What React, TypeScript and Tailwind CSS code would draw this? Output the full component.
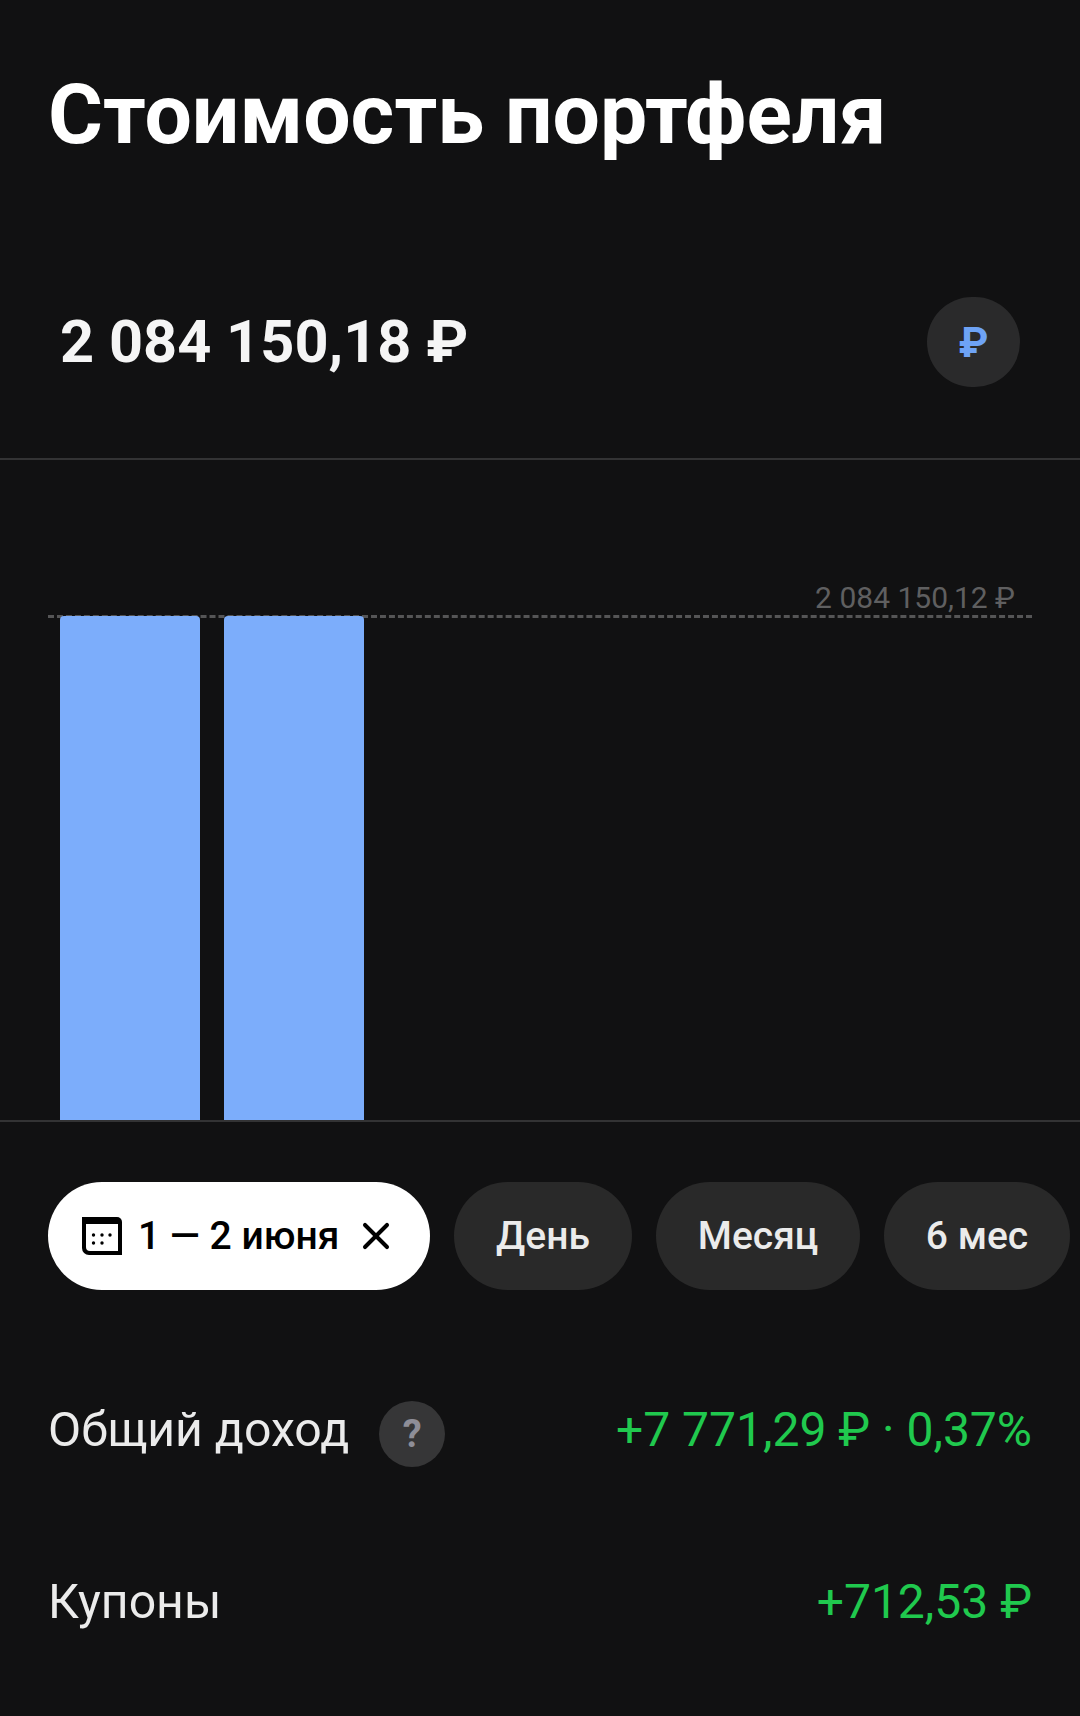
import { X } from "lucide-react"

function CalendarIcon() {
  return (
    <svg width="40" height="38" viewBox="0 0 40 38" className="shrink-0">
      <path d="M0 0h35a5 5 0 0 1 5 5v33H7a7 7 0 0 1-7-7z" fill="#000" />
      <path d="M4 7h32v27H8a4 4 0 0 1-4-4z" fill="#fff" />
      <circle cx="11.5" cy="18" r="1.7" fill="#000" />
      <circle cx="20" cy="18" r="1.7" fill="#000" />
      <circle cx="28" cy="18" r="1.7" fill="#000" />
      <circle cx="11.5" cy="26" r="1.7" fill="#000" />
      <circle cx="20" cy="26" r="1.7" fill="#000" />
    </svg>
  )
}

function Pill({ label, width }: { label: string; width: string }) {
  return (
    <div className={`${width} h-[108px] shrink-0 rounded-full bg-[#292929] flex items-center justify-center text-[39px] font-medium text-[#ebebeb]`}>
      {label}
    </div>
  )
}

function Bar() {
  return <div className="w-[140px] h-[504px] rounded-t-[4px] bg-[#7cadfb]" />
}

export default function App() {
  return (
    <div className="w-[1080px] h-[1716px] overflow-hidden bg-[#111112] text-white font-['Roboto',sans-serif]">
      <h1 className="pt-[66px] pl-[48px] text-[84px] leading-[98px] font-bold">Стоимость портфеля</h1>

      <div className="mt-[133px] pl-[60px] pr-[60px] flex items-center justify-between">
        <div className="text-[59.5px] leading-[68px] font-bold text-[#f5f5f5]">2 084 150,18 ₽</div>
        <div className="w-[93px] h-[90px] rounded-full bg-[#2a2a2b] flex items-center justify-center text-[42px] font-bold text-[#6ea3f5]">₽</div>
      </div>

      <div className="mt-[71px] border-y-2 border-[#333334] h-[664px] relative">
        <div className="absolute right-[65px] top-[120px] text-[30px] leading-[36px] text-[#5f5f60]">2 084 150,12 ₽</div>
        <div className="absolute left-[48px] right-[48px] top-[155px] border-t-[3px] border-dashed border-[#555556]" />
        <div className="absolute left-[60px] bottom-0 flex items-end gap-[24px]">
          <Bar />
          <Bar />
        </div>
      </div>

      <div className="mt-[60px] pl-[48px] flex gap-[24px]">
        <div className="w-[382px] h-[108px] shrink-0 rounded-full bg-white flex items-center pl-[34px] gap-[16px] text-[39px] font-medium text-black">
          <CalendarIcon />
          <span>1 — 2 июня</span>
          <X size={44} strokeWidth={2.2} className="ml-[-1px]" />
        </div>
        <Pill label="День" width="w-[178px]" />
        <Pill label="Месяц" width="w-[204px]" />
        <Pill label="6 мес" width="w-[186px]" />
      </div>

      <div className="mt-[111px] px-[48px] flex items-center justify-between h-[66px]">
        <div className="flex items-center gap-[30px]">
          <span className="text-[48.2px] mt-[-8px] text-[#ebebeb]">Общий доход</span>
          <span className="w-[66px] h-[66px] rounded-full bg-[#363637] flex items-center justify-center text-[38px] font-bold text-[#8e8e98]">?</span>
        </div>
        <span className="text-[48px] mt-[-8px] text-[#20c94e]">+7 771,29 ₽ · 0,37%</span>
      </div>

      <div className="mt-[106px] px-[48px] flex items-center justify-between h-[66px]">
        <span className="text-[48.2px] mt-[-8px] text-[#ebebeb]">Купоны</span>
        <span className="text-[48px] mt-[-8px] text-[#20c94e]">+712,53 ₽</span>
      </div>
    </div>
  )
}
